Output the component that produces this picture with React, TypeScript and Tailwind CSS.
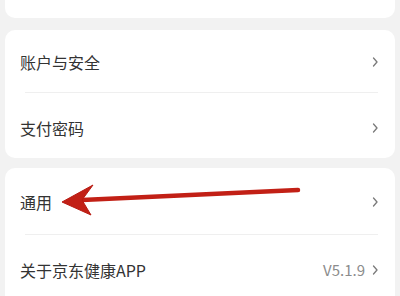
import React from "react";

const Chevron = () => (
  <svg width="8" height="12" viewBox="0 0 8 12" className="shrink-0">
    <path d="M2.5 2 L6 6 L2.5 10" fill="none" stroke="#7a7a7a" strokeWidth="1.3" strokeLinecap="round" strokeLinejoin="round" />
  </svg>
);

const Row = ({ label, value, divider, h }: { label: string; value?: string; divider?: boolean; h: string }) => (
  <div className={`relative flex items-center justify-between pl-[15px] pr-[16px] ${h}`}>
    <span className="text-[16px] text-[#333333]">{label}</span>
    <div className="flex items-center gap-[6px]">
      {value && <span className="text-[15px] text-[#8c8c8c]">{value}</span>}
      <Chevron />
    </div>
    {divider && <div className="absolute left-[20px] right-[17px] bottom-0 h-px bg-[#efefef]" />}
  </div>
);

export default function App() {
  return (
    <div
      className="relative w-[400px] h-[296px] overflow-hidden bg-[#f2f2f2] px-[5px] flex flex-col"
      style={{ fontFamily: '"Noto Sans CJK SC", "Noto Sans", sans-serif' }}
    >
      <div className="shrink-0 h-[18px] bg-white rounded-b-[10px]" />
      <div className="shrink-0 mt-[12px] bg-white rounded-[10px]">
        <Row label="账户与安全" divider h="h-[63px] pt-[1px]" />
        <Row label="支付密码" h="h-[65px] pt-[4px]" />
      </div>
      <div className="shrink-0 mt-[10px] bg-white rounded-[10px]">
        <Row label="通用" divider h="h-[67px]" />
        <Row label="关于京东健康APP" value="V5.1.9" h="h-[70px]" />
      </div>
      <svg className="absolute left-0 top-0" width="400" height="296" viewBox="0 0 400 296">
        <path d="M298 190 L82 200" stroke="#c22016" strokeWidth="4.5" strokeLinecap="round" fill="none" />
        <path d="M62 202 L93 185 L82 200 L91 215 Z" fill="#c22016" stroke="#b81b12" strokeWidth="1" strokeLinejoin="round" />
      </svg>
    </div>
  );
}
